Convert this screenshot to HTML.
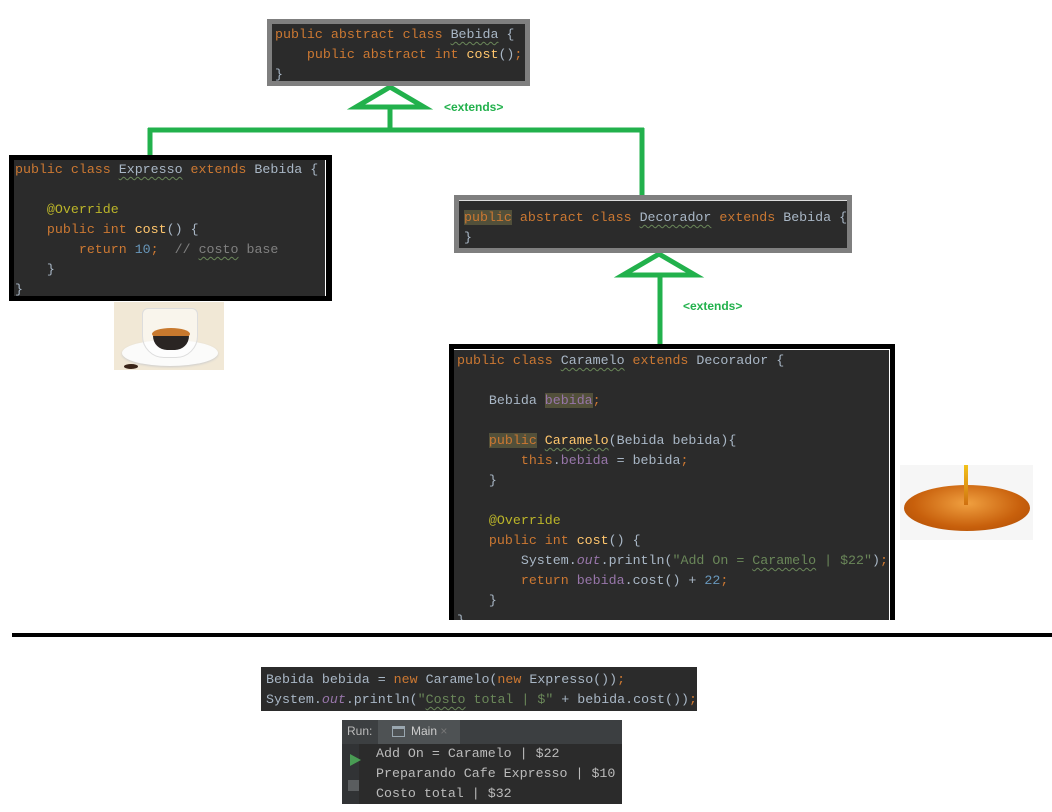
<!DOCTYPE html>
<html><head><meta charset="utf-8"><style>
*{margin:0;padding:0;box-sizing:border-box}
body{width:1052px;height:812px;background:#fff;position:relative;overflow:hidden;font-family:"Liberation Mono",monospace}
.box{position:absolute;background:#2b2b2b}
.code{position:absolute;font-family:"Liberation Mono",monospace;font-size:13.3px;line-height:20px;white-space:pre;color:#a9b7c6}
.k{color:#cc7832}.t{color:#a9b7c6}.b{color:#6897bb}.a{color:#bbb529}.s{color:#6a8759}.f{color:#ffc66d}.p{color:#9876aa}.i{color:#9876aa;font-style:italic}.c{color:#808080}
.w{text-decoration:underline wavy #6a8759;text-underline-offset:3px;text-decoration-thickness:1px}
.hl{background:#52503a}
.ext{position:absolute;font-family:"Liberation Sans",sans-serif;font-weight:bold;font-size:12px;color:#22b14c}
</style></head><body>
<svg width="1052" height="812" style="position:absolute;left:0;top:0">
<g stroke="#22b14c" stroke-width="5" fill="none">
<polygon points="390,87 356,107 424,107" fill="#fff"/>
<line x1="390" y1="108" x2="390" y2="131"/>
<line x1="148" y1="130" x2="644" y2="130"/>
<line x1="150" y1="128" x2="150" y2="156"/>
<line x1="642" y1="128" x2="642" y2="196"/>
<polygon points="659,254 623,275 695,275" fill="#fff"/>
<line x1="660" y1="276" x2="660" y2="345"/>
</g>
</svg>
<div class="ext" style="left:444px;top:100px">&lt;extends&gt;</div>
<div class="ext" style="left:683px;top:299px">&lt;extends&gt;</div>

<!-- Bebida -->
<div class="box" style="left:267px;top:19px;width:263px;height:67px;border:5px solid #7f7f7f"></div>
<div class="code" style="left:275px;top:25px"><span class="k">public abstract class </span><span class="w">Bebida</span> {
    <span class="k">public abstract int </span><span class="f">cost</span>()<span class="k">;</span>
}</div>

<!-- Expresso -->
<div class="box" style="left:9px;top:155px;width:323px;height:146px;border:5px solid #000;border-right:6px solid #000"></div>
<div style="position:absolute;left:325px;top:160px;width:1px;height:136px;background:#fff"></div>
<div class="code" style="left:15px;top:160px"><span class="k">public class </span><span class="w">Expresso</span><span class="k"> extends </span>Bebida {

    <span class="a">@Override</span>
    <span class="k">public int </span><span class="f">cost</span>() {
        <span class="k">return </span><span class="b">10</span><span class="k">;</span>  <span class="c">// <span class="w">costo</span> base</span>
    }
}</div>

<!-- espresso image -->
<div style="position:absolute;left:114px;top:302px;width:110px;height:68px;background:#f1e8d6;overflow:hidden">
<div style="position:absolute;left:8px;top:38px;width:96px;height:26px;border-radius:50%;background:#fbfbfa;box-shadow:0 1px 2px #ccc"></div>
<div style="position:absolute;left:28px;top:6px;width:56px;height:50px;border-radius:6px 6px 22px 22px;background:rgba(255,255,255,.55);border:1px solid #ddd"></div>
<div style="position:absolute;left:38px;top:26px;width:38px;height:12px;border-radius:50%;background:#c8792e"></div>
<div style="position:absolute;left:39px;top:34px;width:36px;height:14px;border-radius:0 0 14px 14px;background:#2a2523"></div>
<div style="position:absolute;left:10px;top:62px;width:14px;height:5px;border-radius:50%;background:#3a2418"></div>
</div>

<!-- Decorador -->
<div class="box" style="left:454px;top:195px;width:398px;height:58px;border:5px solid #7f7f7f"></div>
<div style="position:absolute;left:459px;top:200px;width:388px;height:1px;background:#ddd"></div>
<div class="code" style="left:464px;top:208px"><span class="k hl">public</span><span class="k"> abstract class </span><span class="w">Decorador</span><span class="k"> extends </span>Bebida {
}</div>

<!-- Caramelo -->
<div class="box" style="left:449px;top:344px;width:446px;height:290px;border:5px solid #000;border-bottom:0"></div>
<div style="position:absolute;left:454px;top:349px;width:436px;height:1px;background:#fff"></div>
<div style="position:absolute;left:889px;top:349px;width:1px;height:271px;background:#fff"></div>
<div class="code" style="left:457px;top:351px"><span class="k">public class </span><span class="w">Caramelo</span><span class="k"> extends </span>Decorador {

    Bebida <span class="p hl">bebida</span><span class="k">;</span>

    <span class="k hl">public</span> <span class="f w">Caramelo</span>(Bebida bebida){
        <span class="k">this</span>.<span class="p">bebida</span> = bebida<span class="k">;</span>
    }

    <span class="a">@Override</span>
    <span class="k">public int </span><span class="f">cost</span>() {
        System.<span class="i">out</span>.println(<span class="s">"Add On = <span class="w">Caramelo</span> | $22"</span>)<span class="k">;</span>
        <span class="k">return </span><span class="p">bebida</span>.cost() + <span class="b">22</span><span class="k">;</span>
    }
}</div>
<div style="position:absolute;left:449px;top:620px;width:446px;height:13px;background:#fff"></div>
<div style="position:absolute;left:12px;top:633px;width:1040px;height:4px;background:#000"></div>

<!-- caramel image -->
<div style="position:absolute;left:900px;top:465px;width:133px;height:75px;background:#f6f6f6;overflow:hidden">
<div style="position:absolute;left:4px;top:20px;width:126px;height:46px;border-radius:50%;background:radial-gradient(ellipse at 50% 40%,#f0a040,#c8600c 60%,#a84a06)"></div>
<div style="position:absolute;left:64px;top:0;width:4px;height:40px;background:linear-gradient(#f2c21a,#d07010)"></div>
</div>

<!-- snippet -->
<div class="box" style="left:261px;top:667px;width:436px;height:44px"></div>
<div class="code" style="left:266px;top:670px">Bebida bebida = <span class="k">new </span>Caramelo(<span class="k">new </span>Expresso())<span class="k">;</span>
System.<span class="i">out</span>.println(<span class="s">"<span class="w">Costo</span> total | $"</span> + bebida.cost())<span class="k">;</span></div>

<!-- run panel -->
<div style="position:absolute;left:342px;top:720px;width:280px;height:84px;background:#2b2b2b"></div>
<div style="position:absolute;left:342px;top:720px;width:280px;height:24px;background:#3c3f41"></div>
<div style="position:absolute;left:342px;top:744px;width:17px;height:60px;background:#313335"></div>
<div style="position:absolute;left:347px;top:724px;font-family:'Liberation Sans',sans-serif;font-size:12px;color:#bbb">Run:</div>
<div style="position:absolute;left:378px;top:720px;width:82px;height:24px;background:#4e5254"></div>
<div style="position:absolute;left:392px;top:726px;width:13px;height:11px;border:1px solid #9aa7b0;border-top:3px solid #9aa7b0"></div>
<div style="position:absolute;left:411px;top:724px;font-family:'Liberation Sans',sans-serif;font-size:12px;color:#ccc">Main <span style="color:#777">×</span></div>
<div style="position:absolute;left:350px;top:754px;width:0;height:0;border-left:11px solid #499c54;border-top:6px solid transparent;border-bottom:6px solid transparent"></div>
<div style="position:absolute;left:348px;top:780px;width:11px;height:11px;background:#5a5d5f"></div>
<div class="code" style="left:376px;top:744px;color:#bbb">Add On = Caramelo | $22
Preparando Cafe Expresso | $10
Costo total | $32</div>
</body></html>
